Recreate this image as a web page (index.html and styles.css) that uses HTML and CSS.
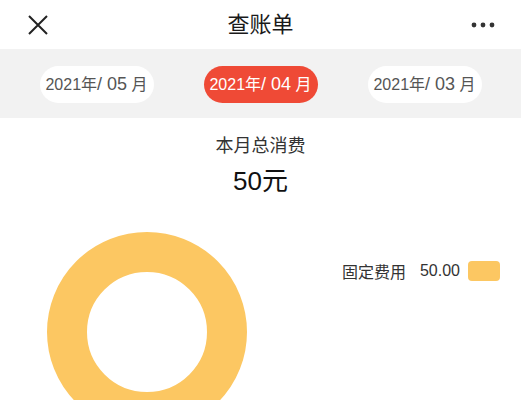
FILE: index.html
```html
<!DOCTYPE html>
<html lang="zh">
<head>
<meta charset="utf-8">
<link rel="stylesheet" href="styles.css">
</head>
<body>
<header class="topbar">
  <svg class="close" width="22" height="22" viewBox="0 0 22 22"><path d="M2 2 L20 20 M20 2 L2 20" stroke="#222" stroke-width="2" fill="none"/></svg>
  <div class="title">查账单</div>
  <svg class="more" width="24" height="6" viewBox="0 0 24 6"><circle cx="3" cy="3" r="2.4" fill="#333"/><circle cx="12" cy="3" r="2.4" fill="#333"/><circle cx="21" cy="3" r="2.4" fill="#333"/></svg>
</header>
<nav class="months">
  <div class="pill">2021年<span class="mm">/ 05</span> 月</div>
  <div class="pill active">2021年<span class="mm">/ 04</span> 月</div>
  <div class="pill">2021年<span class="mm">/ 03</span> 月</div>
</nav>
<section class="summary">
  <div class="label">本月总消费</div>
  <div class="amount">50元</div>
</section>
<section class="chart">
  <div class="donut"></div>
  <div class="legend">
    <span class="lname">固定费用</span>
    <span class="lval">50.00</span>
    <span class="swatch"></span>
  </div>
</section>
</body>
</html>
```
FILE: styles.css
```css
html, body {
  margin: 0;
  padding: 0;
  background: #fff;
  font-family: "Liberation Sans", "Noto Sans CJK SC", sans-serif;
  color: #222;
  overflow: hidden;
}
.topbar {
  height: 49px;
  display: flex;
  align-items: center;
  justify-content: space-between;
  padding: 0 26px 0 27px;
  position: relative;
}
.title {
  position: absolute;
  left: 0;
  right: 0;
  text-align: center;
  font-size: 22px;
  line-height: 49px;
  color: #1a1a1a;
  pointer-events: none;
}
.close { margin-top: 1px; }
.more { margin-top: 1px; }
.months {
  height: 69px;
  background: #f2f2f2;
  display: flex;
  align-items: center;
  justify-content: center;
  gap: 50px;
}
.pill {
  width: 114px;
  height: 37px;
  border-radius: 19px;
  background: #fff;
  color: #555;
  font-size: 16px;
  line-height: 37px;
  text-align: center;
  white-space: nowrap;
  margin-top: 1px;
}
.mm {
  font-size: 18px;
}
.pill.active {
  background: #ef4a36;
  color: #fff;
}
.summary {
  text-align: center;
  padding-top: 15px;
}
.label {
  font-size: 18px;
  line-height: 26px;
  color: #333;
}
.amount {
  font-size: 26px;
  line-height: 36px;
  margin-top: 4px;
  color: #111;
}
.chart {
  display: flex;
  align-items: flex-start;
  padding: 0 21px 0 47px;
  margin-top: 33px;
}
.donut {
  width: 120px;
  height: 120px;
  border: 40px solid #fcc762;
  border-radius: 50%;
  flex: none;
}
.legend {
  margin-left: auto;
  margin-top: 27px;
  display: flex;
  align-items: center;
  font-size: 16px;
  color: #333;
}
.lval { margin-left: 14px; }
.swatch {
  width: 32px;
  height: 20px;
  border-radius: 4px;
  background: #fcc762;
  margin-left: 8px;
}
```
